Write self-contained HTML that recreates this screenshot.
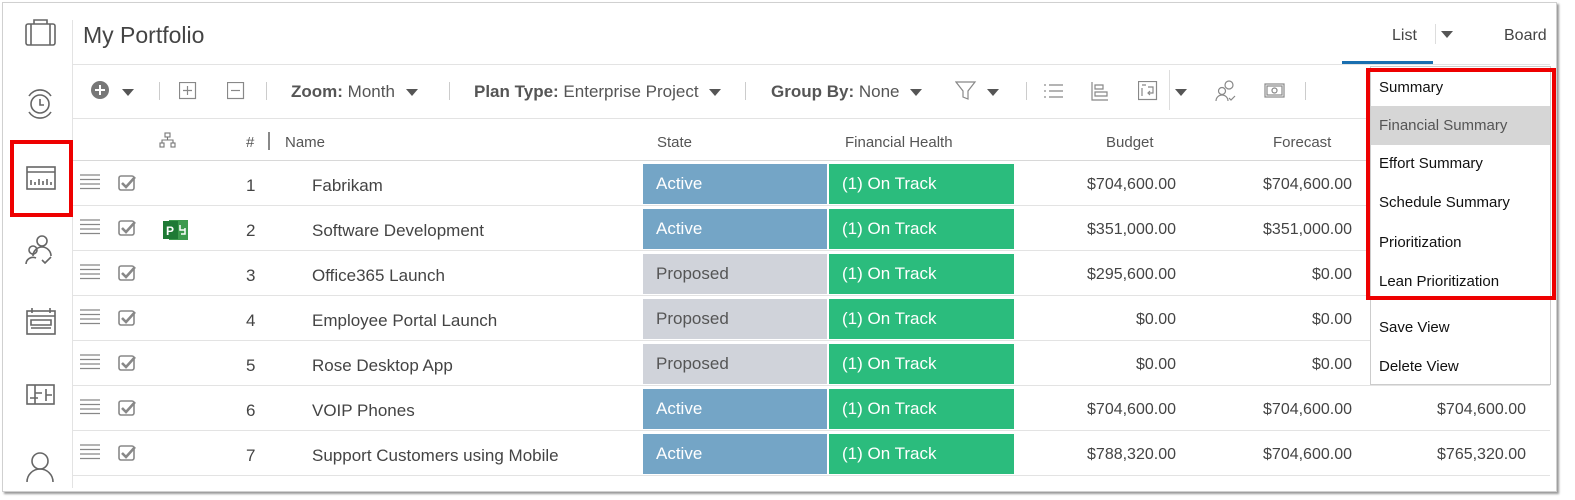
<!DOCTYPE html>
<html style="overflow:hidden"><head><meta charset="utf-8"><style>
*{box-sizing:border-box;margin:0;padding:0}
html,body{overflow:hidden}
body{width:1575px;height:500px;background:#fff;font-family:"Liberation Sans",sans-serif;color:#444;position:relative}
.frame{position:absolute;left:2px;top:2px;width:1555px;height:490px;border:1px solid #d0d0d0;box-shadow:2px 2px 2px #999;background:#fff}
.abs{position:absolute}
.side{position:absolute;left:72px;top:20px;width:1px;height:468px;background:#e3e3e3}
.hl{position:absolute;left:73px;height:1px;background:#e3e3e3;width:1477px}
.t{position:absolute;white-space:nowrap}
.cell{position:absolute;color:#fff;font-size:17px;padding-left:13px;line-height:40px;height:40px}
.act{background:#74a5c6}.prop{background:#d0d3da;color:#555}.trk{background:#2bbc7d}
.num{text-align:right;font-size:16px;color:#444}
.tb{font-size:17px;color:#555}
.tb b{color:#555}
.tri{display:inline-block;width:0;height:0;border-left:6px solid transparent;border-right:6px solid transparent;border-top:7px solid #555;vertical-align:middle}
.sep{position:absolute;top:82px;width:1px;height:18px;background:#ccc}
.menu{position:absolute;left:1370px;top:66px;width:181px;height:319px;background:#fff;border:1px solid #ccc}
.mi{position:absolute;left:8px;font-family:"Liberation Sans",sans-serif;font-size:15px;color:#111}
</style></head><body>
<div class="frame"></div>
<div class="side"></div>
<div class="hl" style="top:64px"></div>
<div class="hl" style="top:118px"></div>
<div class="hl" style="top:160px;background:#d8d8d8"></div>
<div class="hl" style="top:205px"></div><div class="hl" style="top:250px"></div><div class="hl" style="top:295px"></div><div class="hl" style="top:340px"></div><div class="hl" style="top:385px"></div><div class="hl" style="top:430px"></div><div class="hl" style="top:475px"></div>

<svg class="abs" style="left:0;top:0" width="75" height="500" fill="none" stroke="#666" stroke-width="1.6">
<rect x="26" y="24" width="29" height="21" rx="2"/><path d="M34 24v-4h13v4M31 24v21M50 24v21"/>
<circle cx="40" cy="104" r="9"/><path d="M40 99v6h4M29 96a13 13 0 0 1 22 0M29 112a13 13 0 0 0 22 0"/>
<rect x="27" y="167" width="28" height="22"/><path d="M27 172h28M31 185v-5M35 185v-3M39 185v-6M43 185v-4M47 185v-6M51 185v-3"/>
<circle cx="42" cy="241" r="5"/><path d="M33 256a9 9 0 0 1 18 0"/><circle cx="33" cy="250" r="4"/><path d="M26 264a7 7 0 0 1 10-6M42 260l3 3 6-6"/>
<rect x="27" y="311" width="28" height="23"/><path d="M27 316h28M32 308v5M50 308v5M31 320h20v5H31zM31 328h20"/>
<rect x="27" y="385" width="27" height="19"/><path d="M35 385v19M35 393h7M46 389v12M46 395h6M30 398h8"/>
<circle cx="40" cy="461" r="8"/><path d="M27 482a13 13 0 0 1 26 0"/>
</svg>
<div class="abs" style="left:10px;top:140px;width:63px;height:77px;border:4px solid #e00"></div>

<div class="t" style="left:83px;top:22px;font-size:23px;color:#444">My Portfolio</div>
<div class="t" style="left:1392px;top:27px;font-size:16px;color:#444">List</div>
<div class="abs" style="left:1435px;top:24px;width:1px;height:20px;background:#ddd"></div>
<div class="abs" style="left:1441px;top:26px"><span class="tri"></span></div>
<div class="t" style="left:1504px;top:27px;font-size:16px;color:#444">Board</div>
<div class="abs" style="left:1342px;top:61px;width:91px;height:3px;background:#1a6fb0"></div>

<svg class="abs" style="left:90px;top:80px" width="20" height="20"><circle cx="10" cy="10" r="9" fill="#777"/><path d="M10 5v10M5 10h10" stroke="#fff" stroke-width="2"/></svg>
<div class="abs" style="left:122px;top:84px"><span class="tri"></span></div>
<div class="sep" style="left:159px"></div>
<svg class="abs" style="left:179px;top:82px" width="18" height="18" fill="none" stroke="#888" stroke-width="1.2"><rect x=".5" y=".5" width="16" height="16"/><path d="M8.5 4v9M4 8.5h9"/></svg>
<svg class="abs" style="left:227px;top:82px" width="18" height="18" fill="none" stroke="#888" stroke-width="1.2"><rect x=".5" y=".5" width="16" height="16"/><path d="M4 8.5h9"/></svg>
<div class="sep" style="left:266px"></div>
<div class="t tb" style="left:291px;top:82px"><b>Zoom:</b> Month <span class="tri" style="margin-left:6px"></span></div>
<div class="sep" style="left:449px"></div>
<div class="t tb" style="left:474px;top:82px"><b>Plan Type:</b> Enterprise Project <span class="tri" style="margin-left:6px"></span></div>
<div class="sep" style="left:745px"></div>
<div class="t tb" style="left:771px;top:82px"><b>Group By:</b> None <span class="tri" style="margin-left:6px"></span></div>
<svg class="abs" style="left:955px;top:81px" width="22" height="20" fill="none" stroke="#888" stroke-width="1.2"><path d="M1 1h19l-7 9v8l-5-2v-6z"/></svg>
<div class="abs" style="left:987px;top:84px"><span class="tri"></span></div>
<div class="sep" style="left:1026px"></div>
<svg class="abs" style="left:1043px;top:82px" width="22" height="18" stroke="#888" stroke-width="1.2" fill="none"><path d="M6 3h14M6 9h14M6 15h14M2 2v2M2 8v2M2 14v2"/></svg>
<svg class="abs" style="left:1091px;top:81px" width="18" height="20" stroke="#888" stroke-width="1.2" fill="none"><path d="M1 1v18h16M4 4h8v4H4zM4 11h12v4H4z"/></svg>
<svg class="abs" style="left:1138px;top:81px" width="20" height="20" stroke="#888" stroke-width="1.2" fill="none"><rect x=".5" y=".5" width="18" height="18"/><path d="M4 4h4M4 7v8M10 6h5v6h-5M12 10l-2 2 2 2"/></svg>
<div class="abs" style="left:1169px;top:70px;width:1px;height:40px;background:#ddd"></div>
<div class="abs" style="left:1175px;top:84px"><span class="tri"></span></div>
<svg class="abs" style="left:1215px;top:80px" width="24" height="22" stroke="#888" stroke-width="1.2" fill="none"><circle cx="14" cy="5" r="4"/><circle cx="7" cy="11" r="3.5"/><path d="M1 21a6 6 0 0 1 12 0M14 18l2 2 4-4"/></svg>
<svg class="abs" style="left:1263px;top:83px" width="22" height="16" stroke="#888" stroke-width="1.2" fill="none"><rect x="2" y="1" width="19" height="13"/><rect x="4" y="3" width="15" height="9"/><circle cx="11.5" cy="7.5" r="2.5"/></svg>
<div class="sep" style="left:1305px"></div>

<svg class="abs" style="left:159px;top:132px" width="18" height="16" stroke="#777" stroke-width="1.1" fill="none"><rect x="6" y="1" width="5" height="4"/><rect x="1" y="11" width="4" height="4"/><rect x="12" y="11" width="4" height="4"/><path d="M8.5 5v3M3 11V8h11v3"/></svg>
<div class="t" style="left:246px;top:134px;font-size:15px;color:#555">#</div>
<div class="abs" style="left:268px;top:132px;width:2px;height:18px;background:#888"></div>
<div class="t" style="left:285px;top:134px;font-size:15px;color:#555">Name</div>
<div class="t" style="left:657px;top:134px;font-size:15px;color:#555">State</div>
<div class="t" style="left:845px;top:134px;font-size:15px;color:#555">Financial Health</div>
<div class="t" style="left:1106px;top:134px;font-size:15px;color:#555">Budget</div>
<div class="t" style="left:1273px;top:134px;font-size:15px;color:#555">Forecast</div>

<div id="rows"></div>
<script>
var d=[["1","Fabrikam","Active","$704,600.00","$704,600.00",""],["2","Software Development","Active","$351,000.00","$351,000.00",""],["3","Office365 Launch","Proposed","$295,600.00","$0.00",""],["4","Employee Portal Launch","Proposed","$0.00","$0.00",""],["5","Rose Desktop App","Proposed","$0.00","$0.00",""],["6","VOIP Phones","Active","$704,600.00","$704,600.00","$704,600.00"],["7","Support Customers using Mobile","Active","$788,320.00","$704,600.00","$765,320.00"]];
var h="";
d.forEach(function(r,i){var y=160+i*45;
h+='<svg class="abs" style="left:80px;top:'+(y+14)+'px" width="20" height="16" stroke="#888" stroke-width="1.2"><path d="M0 1h20M0 5.5h20M0 10h20M0 14.5h20"/></svg>';
h+='<svg class="abs" style="left:118px;top:'+(y+14)+'px" width="20" height="17" fill="none"><rect x="1" y="2" width="15" height="14" rx="2" stroke="#888" stroke-width="1.6"/><path d="M4 9l4 4 9-10" stroke="#888" stroke-width="2.6"/></svg>';
if(i==1)h+='<svg class="abs" style="left:163px;top:'+(y+14)+'px" width="26" height="22"><rect x="6" y="1" width="19" height="20" fill="#3d9a4e"/><rect x="0" y="2" width="15" height="18" fill="#1e7a35"/><text x="3" y="16" font-size="12" font-weight="bold" fill="#fff" font-family="Liberation Sans">P</text><path d="M17 6v5h5M22 9v6h-4" stroke="#fff" stroke-width="1.5" fill="none"/></svg>';
h+='<div class="t" style="left:246px;top:'+(y+16)+'px;font-size:17px">'+r[0]+'</div>';
h+='<div class="t" style="left:312px;top:'+(y+16)+'px;font-size:17px">'+r[1]+'</div>';
h+='<div class="cell '+(r[2]=="Active"?"act":"prop")+'" style="left:643px;top:'+(y+4)+'px;width:184px">'+r[2]+'</div>';
h+='<div class="cell trk" style="left:829px;top:'+(y+4)+'px;width:185px">(1) On Track</div>';
h+='<div class="t num" style="right:399px;top:'+(y+16)+'px">'+r[3]+'</div>';
h+='<div class="t num" style="right:223px;top:'+(y+16)+'px">'+r[4]+'</div>';
if(r[5])h+='<div class="t num" style="right:49px;top:'+(y+16)+'px">'+r[5]+'</div>';
});
document.getElementById("rows").innerHTML=h;
</script>

<div class="menu">
<div class="abs" style="left:0;top:39px;width:179px;height:39px;background:#d6d6d6"></div>
<div class="mi" style="top:12px">Summary</div>
<div class="mi" style="top:50px;color:#555">Financial Summary</div>
<div class="mi" style="top:88px">Effort Summary</div>
<div class="mi" style="top:127px">Schedule Summary</div>
<div class="mi" style="top:167px">Prioritization</div>
<div class="mi" style="top:206px">Lean Prioritization</div>
<div class="mi" style="top:252px">Save View</div>
<div class="mi" style="top:291px">Delete View</div>
</div>
<div class="abs" style="left:1366px;top:68px;width:190px;height:232px;border:4px solid #e00"></div>
</body></html>
